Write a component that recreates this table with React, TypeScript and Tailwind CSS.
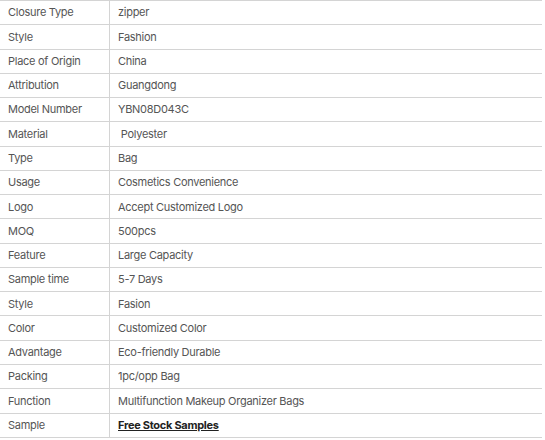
const rows: [string, string][] = [
  ["Closure Type", "zipper"],
  ["Style", "Fashion"],
  ["Place of Origin", "China"],
  ["Attribution", "Guangdong"],
  ["Model Number", "YBN08D043C"],
  ["Material", "\u00a0Polyester"],
  ["Type", "Bag"],
  ["Usage", "Cosmetics Convenience"],
  ["Logo", "Accept Customized Logo"],
  ["MOQ", "500pcs"],
  ["Feature", "Large Capacity"],
  ["Sample time", "5-7 Days"],
  ["Style", "Fasion"],
  ["Color", "Customized Color"],
  ["Advantage", "Eco-friendly Durable"],
  ["Packing", "1pc/opp Bag"],
  ["Function", "Multifunction Makeup Organizer Bags"],
];

const App = () => {
  return (
    <div className="w-[545px] h-[440px] bg-white font-['Inter',sans-serif] text-[11px] tracking-[-0.28px] text-[#555]">
      <div className="w-[542px] border-t border-[#d4d4d4]">
        {rows.map(([label, value], i) => (
          <div key={i} className="flex h-[24.28px] border-b border-[#d4d4d4]">
            <div className="w-[110px] shrink-0 flex items-center pl-2 border-r border-[#d4d4d4]">
              {label}
            </div>
            <div className="flex items-center pl-2">{value}</div>
          </div>
        ))}
        {/* last row: sample link */}
        <div className="flex h-[24.28px] border-b border-[#d4d4d4]">
          <div className="w-[110px] shrink-0 flex items-center pl-2 border-r border-[#d4d4d4]">
            Sample
          </div>
          <div className="flex items-center pl-2">
            <a href="#" className="font-bold underline text-[#222]">
              Free Stock Samples
            </a>
          </div>
        </div>
      </div>
    </div>
  );
};

export default App;
